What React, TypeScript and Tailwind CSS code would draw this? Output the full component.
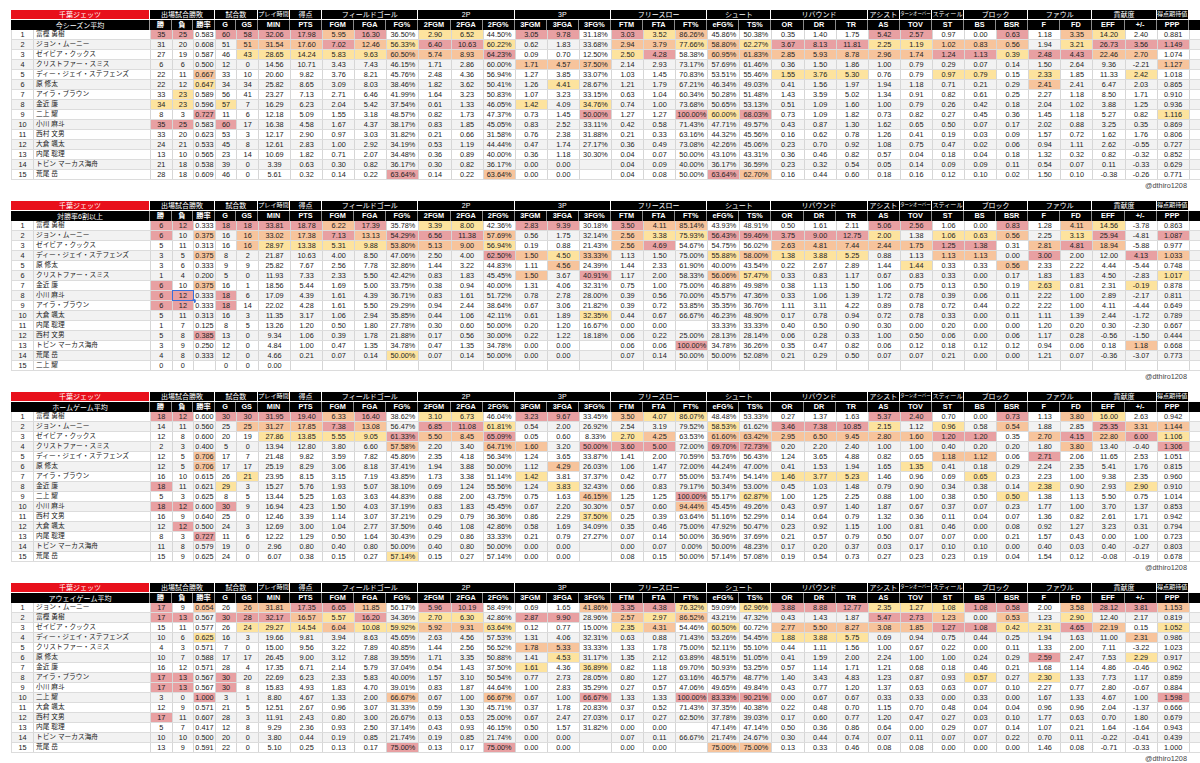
import React from "react";

const GRID = "grid grid-cols-[22px_117px_repeat(5,21.6px)_repeat(29,32.1px)]";

const SPAN: Record<number, string> = { 1: "col-span-1", 2: "col-span-2", 3: "col-span-3" };

const H1: [string, number, string?][] = [
  ["千葉ジェッツ", 2, "red"],
  ["出場試合勝敗", 3],
  ["試合数", 2],
  ["プレイ時間", 1, "s6"],
  ["得点", 1],
  ["フィールドゴール", 3],
  ["2P", 3],
  ["3P", 3],
  ["フリースロー", 3],
  ["シュート", 2],
  ["リバウンド", 3],
  ["アシスト", 1],
  ["ターンオーバー", 1, "s4"],
  ["スティール", 1, "s6"],
  ["ブロック", 2],
  ["ファウル", 2],
  ["貢献度", 2],
  ["得点期待値", 1, "s6"],
];

const H2 = ["勝", "負", "勝率", "G", "GS", "MIN", "PTS", "FGM", "FGA", "FG%", "2FGM", "2FGA", "2FG%", "3FGM", "3FGA", "3FG%", "FTM", "FTA", "FT%", "eFG%", "TS%", "OR", "DR", "TR", "AS", "TOV", "ST", "BS", "BSR", "F", "FD", "EFF", "+/-", "PPP"];

const COLOR: Record<string, string> = {
  r: "bg-[#e8a0a2]",
  o: "bg-[#f7c49c]",
  y: "bg-[#fde39e]",
};

type TableData = { sub: string; rows: string[]; sel?: [number, number] };

const TABLES: TableData[] = [
  {
    sub: "今シーズン平均",
    rows: [
      "富樫 勇樹|35r 25r 0.583 60r 58r 32.06r 17.98r 5.95o 16.30r 36.50% 2.90y 6.52y 44.50% 3.05r 9.78r 31.18% 3.03r 3.52y 86.26%o 45.86% 50.38% 0.35 1.40 1.75 5.42r 2.57r 0.97 0.00 0.63r 1.18 3.35o 14.20y 2.40 0.881",
      "ジョン・ムーニー|31 20 0.608 51 51o 31.54o 17.60o 7.02r 12.46o 56.33%y 6.40r 10.63r 60.22%y 0.62 1.83 33.68% 2.94o 3.79o 77.66%y 58.80%o 62.27%y 3.67r 8.13r 11.81r 2.25y 1.19y 1.02o 0.83o 0.56o 1.94 3.21y 26.73r 3.56r 1.149r",
      "ゼイビア・クックス|27 19 0.587 46 43y 28.65y 14.24y 5.83y 9.63y 60.50%o 5.74o 8.93o 64.23%r 0.09 0.70 12.50% 2.50y 4.28r 58.38% 60.95%o 61.83%o 2.85o 5.93o 8.78o 2.96o 1.74o 1.24r 1.13r 0.39y 2.48r 4.43r 22.46o 2.70o 1.074",
      "クリストファー・スミス|6 6 0.500 12 0 14.56 10.71 3.43 7.43 46.15% 1.71 2.86 60.00% 1.71o 4.57o 37.50%o 2.14 2.93 73.17% 57.69% 61.46% 0.36 1.50 1.86 1.00 0.79 0.29 0.07 0.14 1.50 2.64 9.36 -2.21 1.127o",
      "ディー・ジェイ・ステフェンズ|22 11 0.667o 33 10 20.60 9.82 3.76 8.21 45.76% 2.48 4.36 56.94% 1.27 3.85 33.07% 1.03 1.45 70.83% 53.51% 55.46% 1.55y 3.76y 5.30y 0.76 0.79 0.97y 0.79y 0.15 2.33y 1.85 11.33 2.42y 1.018",
      "原 修太|22 12 0.647y 34 34 25.82 8.65 3.09 8.03 38.46% 1.82 3.62 50.41% 1.26 4.41y 28.67% 1.21 1.79 67.21% 46.34% 49.03% 0.41 1.56 1.97 1.94 1.18 0.71 0.21 0.29 2.41o 2.41 6.47 2.03 0.865",
      "アイラ・ブラウン|33 23y 0.589 56 41 23.27 7.13 2.71 6.46 41.99% 1.64 3.23 50.83% 1.07 3.23 33.15% 0.63 1.04 60.34% 50.28% 51.48% 1.43 3.59 5.02 1.34 0.91 0.82 0.61 0.25 2.27 1.18 8.50 1.71 0.910",
      "金近 廉|34y 23y 0.596 57y 7 16.29 6.23 2.04 5.42 37.54% 0.61 1.33 46.05% 1.42y 4.09 34.76%y 0.74 1.00 73.68% 50.65% 53.13% 0.51 1.09 1.60 1.00 0.79 0.26 0.42 0.18 2.04 1.02 3.88 1.25 0.936",
      "二上 耀|8 3 0.727r 11 6 12.18 5.09 1.55 3.18 48.57% 0.82 1.73 47.37% 0.73 1.45 50.00%r 1.27 1.27 100.00%r 60.00%y 68.03%r 0.73 1.09 1.82 0.73 0.82 0.27 0.45 0.36 1.45 1.18 5.27 0.82 1.116y",
      "小川 麻斗|35r 25r 0.583 60r 17 16.38 4.58 1.67 4.37 38.17% 0.83 1.85 45.05% 0.83 2.52 33.11% 0.42 0.58 71.43% 47.71% 49.57% 0.43 0.87 1.30 1.62 0.65 0.50 0.07 0.17 2.02 0.88 3.25 0.35 0.869",
      "西村 文男|33 20 0.623 53 3 12.17 2.90 0.97 3.03 31.82% 0.21 0.66 31.58% 0.76 2.38 31.88% 0.21 0.33 63.16% 44.32% 45.56% 0.16 0.62 0.78 1.26 0.41 0.19 0.03 0.09 1.57 0.72 1.62 1.76 0.806",
      "大倉 颯太|24 21 0.533 45 8 12.61 2.83 1.00 2.92 34.19% 0.53 1.19 44.44% 0.47 1.74 27.17% 0.36 0.49 73.08% 42.26% 45.06% 0.23 0.70 0.92 1.08 0.75 0.47 0.02 0.06 0.94 1.11 2.62 -0.55 0.727",
      "内尾 聡理|13 10 0.565 23 14 10.69 1.82 0.71 2.07 34.48% 0.36 0.89 40.00% 0.36 1.18 30.30% 0.04 0.07 50.00% 43.10% 43.31% 0.36 0.46 0.82 0.57 0.04 0.18 0.04 0.18 1.32 0.32 0.82 -0.32 0.852",
      "トビン マーカス海舟|21 18 0.538 39 0 3.39 0.63 0.30 0.82 36.17% 0.30 0.82 36.17% 0.00 0.00 _ 0.04 0.09 40.00% 36.17% 36.59% 0.23 0.32 0.54 0.05 0.14 0.09 0.09 0.11 0.54 0.07 0.11 -0.33 0.629",
      "荒尾 岳|28 18 0.609 46 0 5.61 0.32 0.14 0.22 63.64%r 0.14 0.22 63.64%o 0.00 0.00 _ 0.04 0.08 50.00% 63.64%r 62.70%o 0.16 0.44 0.60 0.18 0.16 0.12 0.10 0.02 1.50 0.10 -0.38 -0.26 0.771",
    ],
  },
  {
    sub: "対勝率6割以上",
    sel: [7, 1],
    rows: [
      "富樫 勇樹|6r 12r 0.333 18r 18r 33.81r 18.78r 6.22o 17.39r 35.78% 3.39y 8.00y 42.36% 2.83r 9.39r 30.18% 3.50r 4.11o 85.14%o 43.93% 48.91% 0.50 1.61 2.11 5.06r 2.56r 1.06 0.00 0.83r 1.28 4.11o 14.56y -3.78 0.863",
      "ジョン・ムーニー|6r 10 0.375o 16 16o 33.02o 17.38o 7.13r 13.13o 54.29%r 6.56r 11.38r 57.69%o 0.56 1.75 32.14% 2.56o 3.38y 75.93%y 56.43%r 59.46%r 3.75r 9.00r 12.75r 2.00y 1.38 1.06y 0.63y 0.56o 2.25 3.13y 25.94r -4.81 1.087r",
      "ゼイビア・クックス|5 11 0.313 16 16o 28.97y 13.38y 5.31y 9.88y 53.80%o 5.13o 9.00o 56.94%y 0.19 0.88 21.43% 2.56o 4.69r 54.67% 54.75% 56.02% 2.63o 4.81o 7.44o 2.44o 1.75o 1.25r 1.38r 0.31 2.81o 4.81r 18.94o -5.88 0.977",
      "ディー・ジェイ・ステフェンズ|3 5 0.375o 8 2 21.87 10.63 4.00 8.50 47.06% 2.50 4.00 62.50%r 1.50o 4.50y 33.33%o 1.13 1.50 75.00% 55.88%y 58.00%o 1.38y 3.88y 5.25y 0.88 1.13 1.13o 1.13o 0.00 3.00r 2.00 12.00 4.13r 1.033o",
      "原 修太|3 6 0.333 9 9 25.82 7.67 2.56 7.78 32.86% 1.44 3.22 44.83% 1.11 4.56o 24.39% 1.44 2.33 61.90% 40.00% 43.54% 0.22 2.67 2.89 1.44 1.44y 0.33 0.33 0.56o 2.33 2.22 4.44 -5.44 0.748",
      "クリストファー・スミス|1 4 0.200 5 0 11.93 7.33 2.33 5.50 42.42% 0.83 1.83 45.45% 1.50o 3.67 40.91%r 1.17 2.00 58.33% 56.06%o 57.47%y 0.33 0.83 1.17 0.67 0.83 0.33 0.00 0.17 1.83 1.83 4.50 -2.83 1.017y",
      "金近 廉|6r 10 0.375o 16 1 18.56 5.44 1.69 5.00 33.75% 0.38 0.94 40.00% 1.31 4.06 32.31% 0.75 1.00 75.00% 46.88% 49.98% 0.38 1.13 1.50 1.06 0.75 0.13 0.50 0.19 2.63y 0.81 2.31 -0.19y 0.878",
      "小川 麻斗|6r 12r 0.333 18r 6 17.09 4.39 1.61 4.39 36.71% 0.83 1.61 51.72% 0.78 2.78 28.00% 0.39 0.56 70.00% 45.57% 47.36% 0.33 1.06 1.39 1.72 0.78 0.39 0.06 0.11 2.22 1.00 2.89 -2.17 0.811",
      "アイラ・ブラウン|6r 12r 0.333 18r 14 22.02 4.28 1.61 5.50 29.29% 0.94 2.44 38.64% 0.67 3.06 21.82% 0.39 0.72 53.85% 35.35% 36.76% 1.11 3.11 4.22 0.89 0.78 0.72 0.44 0.22 2.22 1.00 4.11 -4.44 0.649",
      "大倉 颯太|5 11 0.313 16 3 11.35 3.17 1.06 2.94 35.85% 0.44 1.06 42.11% 0.61 1.89 32.35%y 0.44 0.67 66.67% 46.23% 48.90% 0.17 0.78 0.94 0.72 0.78 0.33 0.00 0.11 1.11 1.39 2.44 -1.72 0.789",
      "内尾 聡理|1 7 0.125 8 5 13.26 1.20 0.50 1.80 27.78% 0.30 0.60 50.00% 0.20 1.20 16.67% 0.00 0.00 _ 33.33% 33.33% 0.40 0.50 0.90 0.30 0.00 0.20 0.00 0.00 1.20 0.20 0.30 -2.30 0.667",
      "西村 文男|5 8 0.385r 13 0 9.34 1.06 0.39 1.78 21.88% 0.17 0.56 30.00% 0.22 1.22 18.18% 0.06 0.22 25.00% 28.13% 28.14% 0.06 0.28 0.33 1.00 0.50 0.06 0.00 0.06 1.17 0.28 -0.56 -1.50 0.444",
      "トビン マーカス海舟|3 9 0.250 12 0 4.84 1.00 0.47 1.35 34.78% 0.47 1.35 34.78% 0.00 0.00 _ 0.06 0.06 100.00%r 34.78% 36.26% 0.35 0.47 0.82 0.06 0.12 0.18 0.12 0.12 0.94 0.06 0.18 1.18o 0.668",
      "荒尾 岳|4 8 0.333 12 0 4.66 0.21 0.07 0.14 50.00%y 0.07 0.14 50.00% 0.00 0.00 _ 0.07 0.14 50.00% 50.00% 52.08% 0.21 0.29 0.50 0.07 0.07 0.21 0.00 0.00 1.21 0.07 -0.36 -3.07 0.773",
      "二上 耀|0 0 _ 0 0 0.00",
    ],
  },
  {
    sub: "ホームゲーム平均",
    rows: [
      "富樫 勇樹|18r 12r 0.600 30r 30r 31.95r 19.40r 6.33o 16.40r 38.62% 3.10y 6.73y 46.04% 3.23r 9.67r 33.45% 3.50o 4.07y 86.07%y 48.48% 53.33% 0.27 1.37 1.63 5.37r 2.40r 0.70 0.00 0.73r 1.13 3.80o 16.00y 2.63 0.942",
      "ジョン・ムーニー|14 11 0.560 25 25o 31.27o 17.85o 7.38r 13.08o 56.47% 6.85r 11.08r 61.81%y 0.54 2.00 26.92% 2.54 3.19 79.52% 58.53%y 61.62% 3.46r 7.38r 10.85r 2.15y 1.12 0.96y 0.58 0.54o 1.88 2.85 25.35r 3.31o 1.144o",
      "ゼイビア・クックス|12 8 0.600 20 19 27.86y 13.85y 5.55y 9.05y 61.33%r 5.50o 8.45o 65.09%r 0.05 0.60 8.33% 2.70y 4.25o 63.53% 61.60%o 63.42%o 2.95o 6.50o 9.45o 2.80o 1.60o 1.20r 1.20r 0.35 2.70o 4.15r 22.80o 6.00r 1.106y",
      "クリストファー・スミス|2 3 0.400 5 0 13.94 12.80 3.80 6.60 57.58%o 2.20 3.40 64.71%o 1.60o 3.20 50.00%r 3.60r 5.00r 72.00% 69.70%r 72.73%r 0.20 2.20 2.40 1.00 1.00 0.40 0.20 0.20 1.80 3.80o 13.40 -0.40 1.306r",
      "ディー・ジェイ・ステフェンズ|12 5 0.706o 17 7 21.48 9.82 3.59 7.82 45.86% 2.35 4.18 56.34% 1.24 3.65 33.87% 1.41 2.00 70.59% 53.76% 56.43% 1.24 3.65 4.88 0.82 0.65 1.18o 1.12o 0.06 2.71r 2.06 11.65 2.53 1.051",
      "原 修太|12 5 0.706o 17 17 25.19 8.29 3.06 8.18 37.41% 1.94 3.88 50.00% 1.12 4.29o 26.03% 1.06 1.47 72.00% 44.24% 47.00% 0.41 1.53 1.94 1.65 1.35y 0.41 0.18 0.29 2.24 2.35 5.41 1.76 0.815",
      "アイラ・ブラウン|16 10 0.615 26 21y 23.95 8.15 3.15 7.19 43.85% 1.73 3.38 51.14% 1.42y 3.81 37.37% 0.42 0.77 55.00% 53.74% 54.14% 1.46y 3.77y 5.23y 1.46 0.96 0.69 0.65y 0.23 2.23 1.00 9.38 2.35 0.960",
      "金近 廉|18r 11 0.621 29y 3 15.27 5.76 1.93 5.07 38.10% 0.69 1.24 55.56% 1.24 3.83y 32.43% 0.66 0.83 79.17% 50.34% 53.00% 0.45 1.03 1.48 0.79 0.90 0.34 0.38 0.14 2.38y 0.90 2.93 2.90y 0.910",
      "二上 耀|5 3 0.625 8 5 13.44 5.25 1.63 3.63 44.83% 0.88 2.00 43.75% 0.75 1.63 46.15%o 1.25 1.25 100.00%r 55.17% 62.87%y 1.00 1.25 2.25 0.88 1.00 0.38 0.50 0.50y 1.38 1.13 5.50 0.75 1.014",
      "小川 麻斗|18r 12r 0.600 30r 9 16.94 4.23 1.50 4.03 37.19% 0.83 1.83 45.45% 0.67 2.20 30.30% 0.57 0.60 94.44%o 45.45% 49.26% 0.43 0.97 1.40 1.87 0.67 0.37 0.07 0.23 1.77 1.00 3.70 1.37 0.853",
      "西村 文男|16 9 0.640 25 0 12.46 3.39 1.14 3.07 37.21% 0.29 0.79 36.36% 0.86 2.29 37.50%y 0.25 0.39 63.64% 51.16% 52.29% 0.14 0.64 0.79 1.32 0.36 0.11 0.04 0.07 1.36 0.82 2.61 1.71 0.942",
      "大倉 颯太|12 12r 0.500 24 3 12.69 3.00 1.04 2.77 37.50% 0.46 1.08 42.86% 0.58 1.69 34.09% 0.35 0.46 75.00% 47.92% 50.47% 0.23 0.92 1.15 1.00 0.81 0.46 0.00 0.08 0.92 1.27 3.23 0.31 0.794",
      "内尾 聡理|8 3 0.727r 11 6 12.22 1.29 0.50 1.64 30.43% 0.29 0.86 33.33% 0.21 0.79 27.27% 0.07 0.14 50.00% 36.96% 37.69% 0.21 0.57 0.79 0.50 0.07 0.07 0.00 0.21 1.57 0.43 0.00 1.00 0.723",
      "トビン マーカス海舟|11 8 0.579 19 0 2.96 0.80 0.40 0.80 50.00% 0.40 0.80 50.00% 0.00 0.00 _ 0.00 0.07 0.00% 50.00% 48.23% 0.17 0.20 0.37 0.03 0.17 0.10 0.10 0.00 0.40 0.03 0.40 -0.27 0.803",
      "荒尾 岳|15 9 0.625 24 0 6.07 0.38 0.15 0.27 57.14%y 0.15 0.27 57.14% 0.00 0.00 _ 0.08 0.15 50.00% 57.14% 57.08% 0.19 0.54 0.73 0.27 0.23 0.23 0.19 0.04 1.54 0.12 -0.08 -0.19 0.678",
    ],
  },
  {
    sub: "アウェイゲーム平均",
    rows: [
      "ジョン・ムーニー|17r 9 0.654o 26 26o 31.81o 17.35r 6.65r 11.85o 56.17% 5.96r 10.19r 58.49% 0.69 1.65 41.86%o 3.35r 4.38r 76.32%y 59.09% 62.96%y 3.88r 8.88r 12.77r 2.35y 1.27y 1.08y 1.08r 0.58r 2.00 3.58o 28.12r 3.81r 1.153o",
      "富樫 勇樹|17r 13r 0.567 30r 28r 32.17r 16.57o 5.57y 16.20r 34.36% 2.70y 6.30y 42.86% 2.87r 9.90r 28.96% 2.57o 2.97y 86.52%o 43.21% 47.32% 0.43 1.43 1.87 5.47r 2.73r 1.23o 0.00 0.53o 1.23 2.90y 12.40 2.17 0.819",
      "ゼイビア・クックス|15 11 0.577 26 24y 29.27y 14.54y 6.04o 10.08y 59.92%y 5.92o 9.31o 63.64%y 0.12 0.77 15.00% 2.35y 4.31o 54.46% 60.50%y 60.72% 2.77o 5.50o 8.27o 3.08o 1.85o 1.27r 1.08r 0.42y 2.31y 4.65r 22.19o 0.15 1.052y",
      "ディー・ジェイ・ステフェンズ|10 6 0.625y 16 3 19.66 9.81 3.94 8.63 45.65% 2.63 4.56 57.53% 1.31 4.06 32.31% 0.63 0.88 71.43% 53.26% 54.45% 1.88y 3.88y 5.75y 0.69 0.94 0.75 0.44 0.25 1.94 1.63 11.00 2.31o 0.986",
      "クリストファー・スミス|4 3 0.571 7 0 15.00 9.56 3.22 7.89 40.85% 1.44 2.56 56.52% 1.78o 5.33o 33.33% 1.33 1.78 75.00% 52.11% 55.10% 0.44 1.11 1.56 1.00 0.67 0.22 0.00 0.11 1.33 2.00 7.11 -3.22 1.023",
      "原 修太|10 7 0.588 17 17 26.45 9.00 3.12 7.88 39.55% 1.71 3.35 50.88% 1.41 4.53y 31.17% 1.35 2.12 63.89% 48.51% 51.05% 0.41 1.59 2.00 2.24 1.00 1.00 0.24 0.29 2.59r 2.47 7.53 2.29y 0.917",
      "金近 廉|16 12 0.571 28 4 17.35 6.71 2.14 5.79 37.04% 0.54 1.43 37.50% 1.61y 4.36 36.89%y 0.82 1.18 69.70% 50.93% 53.25% 0.57 1.14 1.71 1.21 0.68 0.18 0.46 0.21 1.68 1.14 4.86 -0.46 0.962",
      "アイラ・ブラウン|17r 13r 0.567 30r 20 22.69 6.23 2.33 5.83 40.00% 1.57 3.10 50.54% 0.77 2.73 28.05% 0.80 1.27 63.16% 46.57% 48.77% 1.40 3.43 4.83 1.23 0.87 0.93 0.57y 0.27 2.30y 1.33 7.73 1.17 0.859",
      "小川 麻斗|17r 13r 0.567 30r 8 15.83 4.93 1.83 4.70 39.01% 0.83 1.87 44.64% 1.00 2.83 35.29% 0.27 0.57 47.06% 49.65% 49.84% 0.43 0.77 1.20 1.37 0.63 0.63 0.07 0.10 2.27 0.77 2.80 -0.67 0.884",
      "二上 耀|3 0 1.000r 3 1 8.80 4.67 1.33 2.00 66.67%o 0.67 1.00 66.67%o 0.67 1.00 66.67%r 1.33 1.33 100.00%r 83.33%r 90.21%r 0.00 0.67 0.67 0.33 0.33 0.00 0.33 0.00 1.67 1.33 4.67 1.00 1.598r",
      "大倉 颯太|12 9 0.571 21 5 12.51 2.67 0.96 3.07 31.33% 0.59 1.30 45.71% 0.37 1.78 20.83% 0.37 0.52 71.43% 37.35% 40.38% 0.22 0.48 0.70 1.15 0.70 0.48 0.04 0.04 0.96 0.96 2.04 -1.37 0.666",
      "西村 文男|17r 11 0.607 28 3 11.91 2.43 0.80 3.00 26.67% 0.13 0.53 25.00% 0.67 2.47 27.03% 0.17 0.27 62.50% 37.78% 39.03% 0.17 0.60 0.77 1.20 0.47 0.27 0.03 0.10 1.77 0.63 0.70 1.80 0.679",
      "内尾 聡理|5 7 0.417 12 8 9.29 2.36 0.93 2.50 37.14% 0.43 0.93 46.15% 0.50 1.57 31.82% 0.00 0.00 _ 47.14% 47.14% 0.50 0.36 0.86 0.64 0.00 0.29 0.07 0.14 1.07 0.21 1.64 -1.64 0.943",
      "トビン マーカス海舟|10 10 0.500 20 0 3.80 0.44 0.19 0.85 21.74% 0.19 0.85 21.74% 0.00 0.00 _ 0.07 0.11 66.67% 21.74% 24.67% 0.30 0.44 0.74 0.07 0.11 0.07 0.07 0.22 0.70 0.11 -0.22 -0.41 0.439",
      "荒尾 岳|13 9 0.591 22 0 5.10 0.25 0.13 0.17 75.00%r 0.13 0.17 75.00%r 0.00 0.00 _ 0.00 0.00 _ 75.00%o 75.00%o 0.13 0.33 0.46 0.08 0.08 0.00 0.00 0.00 1.46 0.08 -0.71 -0.33 1.000",
    ],
  },
];

function parseToken(t: string | undefined): { v: string; c: string } {
  if (!t || t === "_") return { v: "", c: "" };
  const last = t[t.length - 1];
  if (last === "r" || last === "o" || last === "y") return { v: t.slice(0, -1), c: COLOR[last] };
  return { v: t, c: "" };
}

function HeaderRows({ sub }: { sub: string }) {
  return (
    <>
      <div className={`${GRID} h-[10px]`}>
        {H1.map(([label, span, kind], i) => {
          const size = kind === "s4" ? "text-[4.4px]" : kind === "s6" ? "text-[6.1px]" : "text-[7px]";
          const bg = kind === "red" ? "bg-[#e8101b]" : "bg-black";
          return (
            <div
              key={i}
              className={`${SPAN[span]} ${bg} ${size} text-white flex items-center justify-center border-r border-b border-white leading-none whitespace-nowrap overflow-hidden`}
            >
              {label}
            </div>
          );
        })}
      </div>
      <div className={`${GRID} h-[10px] bg-black`}>
        <div className="col-span-2 text-[7px] text-white flex items-center justify-center border-r border-[#9a9a9a] leading-none">
          {sub}
        </div>
        {H2.map((h, i) => (
          <div
            key={i}
            className="text-[7.3px] font-bold text-white flex items-center justify-center border-r border-[#8a8a8a] leading-none whitespace-nowrap"
          >
            {h}
          </div>
        ))}
      </div>
    </>
  );
}

function DataRow({ idx, row, sel }: { idx: number; row: string; sel?: number }) {
  const [name, rest] = row.split("|");
  const toks = rest.split(" ");
  const cells = [];
  for (let i = 0; i < 34; i++) cells.push(parseToken(toks[i]));
  const bg = idx % 2 === 1 ? "bg-[#f2f2f2]" : "bg-white";
  return (
    <div className={`${GRID} h-[10px] ${bg} border-b border-l border-[#dcdcdc]`}>
      <div className="text-[7.3px] flex items-center justify-center border-r border-[#d6d6d6] leading-none">{idx + 1}</div>
      <div className="text-[6.7px] flex items-center pl-[2px] border-r border-[#d6d6d6] leading-none whitespace-nowrap overflow-hidden">
        {name}
      </div>
      {cells.map((c, i) => (
        <div
          key={i}
          className={`relative text-[7.3px] flex items-center justify-center border-r border-[#d6d6d6] leading-none whitespace-nowrap ${c.c}`}
        >
          {c.v}
          {sel === i && (
            <>
              <div className="absolute left-[-1px] top-[-1px] right-[-1px] bottom-[-1px] border border-[#3a6fd8]" />
              <div className="absolute right-[-3px] bottom-[-3px] w-[4px] h-[4px] rounded-full bg-[#3a6fd8]" />
            </>
          )}
        </div>
      ))}
    </div>
  );
}

function Block({ t }: { t: TableData }) {
  return (
    <div className="h-[191px] flex flex-col">
      <HeaderRows sub={t.sub} />
      {t.rows.map((r, i) => (
        <DataRow key={i} idx={i} row={r} sel={t.sel && t.sel[0] === i ? t.sel[1] : undefined} />
      ))}
      <div className="w-[1178px] flex justify-end pr-[2px] pt-[1px] text-[7.3px] text-[#444] leading-[10px]">@dthiro1208</div>
    </div>
  );
}

export default function App() {
  return (
    <div className="w-[1200px] h-[763px] overflow-hidden bg-white pl-[11px] pt-[10px] text-[#222] font-['Liberation_Sans','Noto_Sans_CJK_JP',sans-serif]">
      {TABLES.map((t, i) => (
        <Block key={i} t={t} />
      ))}
    </div>
  );
}
